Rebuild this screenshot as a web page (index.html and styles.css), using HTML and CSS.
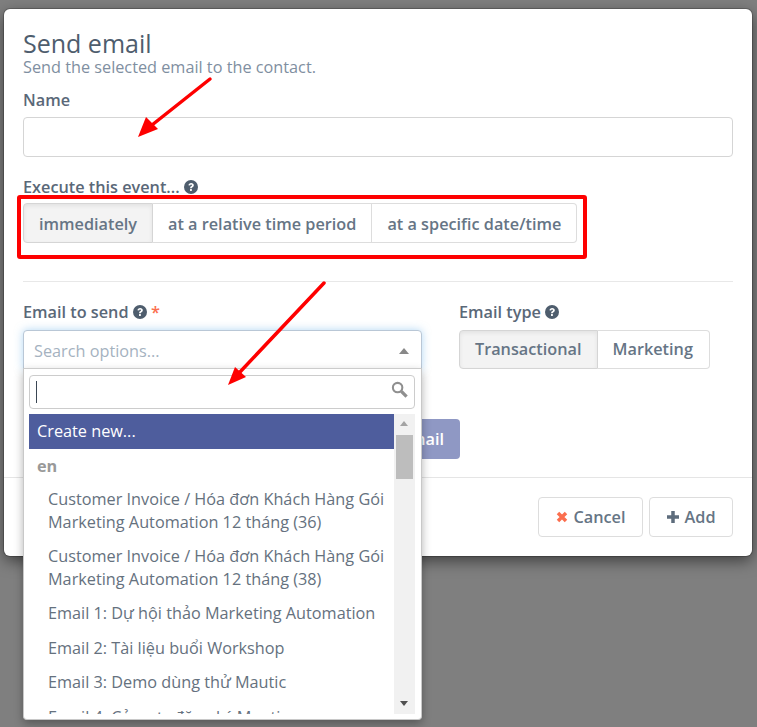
FILE: index.html
```html
<!DOCTYPE html>
<html lang="vi">
<head>
    <meta charset="UTF-8">
    <meta name="viewport" content="width=device-width, initial-scale=1.0">
    <title>Send email</title>
    <link rel="stylesheet" href="styles.css">
</head>
<body>
    <div class="modal">
        <div class="modal-body">
            <h1 class="title">Send email</h1>
            <p class="subtitle">Send the selected email to the contact.</p>

            <label class="label label-name">Name</label>
            <input class="text-input" type="text">

            <label class="label label-execute">Execute this event...
                <svg class="help" viewBox="0 0 24 24"><circle cx="12" cy="12" r="12"/><path class="help-mark" d="M7.500 9.200c.3-2.700 2.200-4.200 4.700-4.200 2.700 0 4.600 1.600 4.600 3.900 0 1.800-1 2.700-2.200 3.400-.9.600-1.200.9-1.200 1.900h-3c0-2 .7-2.900 1.900-3.700.9-.6 1.400-1 1.400-1.600 0-.8-.7-1.300-1.500-1.300-.9 0-1.500.6-1.700 1.700zM10.400 15.500h3v3.200h-3z"/></svg>
            </label>
            <div class="btn-group">
                <span class="toggle active">immediately</span>
                <span class="toggle">at a relative time period</span>
                <span class="toggle">at a specific date/time</span>
            </div>

            <hr class="divider">

            <div class="row">
                <div class="col-email">
                    <label class="label">Email to send
                        <svg class="help" viewBox="0 0 24 24"><circle cx="12" cy="12" r="12"/><path class="help-mark" d="M7.500 9.200c.3-2.700 2.200-4.200 4.700-4.200 2.700 0 4.600 1.600 4.600 3.900 0 1.800-1 2.700-2.200 3.400-.9.600-1.200.9-1.200 1.900h-3c0-2 .7-2.900 1.900-3.700.9-.6 1.400-1 1.400-1.600 0-.8-.7-1.300-1.500-1.300-.9 0-1.500.6-1.700 1.700zM10.400 15.500h3v3.200h-3z"/></svg>
                        <span class="required">*</span>
                    </label>
                    <div class="select-box">
                        <div class="select-head">
                            <span class="placeholder">Search options...</span>
                            <span class="caret-up"></span>
                        </div>
                        <div class="select-drop">
                            <div class="drop-search">
                                <span class="text-cursor"></span>
                                <svg class="search-icon" viewBox="0 0 18 18"><circle cx="7" cy="7" r="5" /><path d="M11 11l5.500 5.500"/></svg>
                            </div>
                            <div class="drop-list">
                                <div class="drop-items">
                                    <div class="option highlighted">Create new...</div>
                                    <div class="group-name">en</div>
                                    <div class="option">Customer Invoice / Hóa đơn Khách Hàng Gói Marketing Automation 12 tháng (36)</div>
                                    <div class="option">Customer Invoice / Hóa đơn Khách Hàng Gói Marketing Automation 12 tháng (38)</div>
                                    <div class="option">Email 1: Dự hội thảo Marketing Automation</div>
                                    <div class="option">Email 2: Tài liệu buổi Workshop</div>
                                    <div class="option">Email 3: Demo dùng thử Mautic</div>
                                    <div class="option">Email 4: Cảm ơn đăng ký Mautic</div>
                                </div>
                                <div class="scrollbar">
                                    <span class="scroll-up"></span>
                                    <span class="scroll-thumb"></span>
                                    <span class="scroll-down"></span>
                                </div>
                            </div>
                        </div>
                    </div>
                    <div class="new-email">New Email</div>
                </div>
                <div class="col-type">
                    <label class="label">Email type
                        <svg class="help" viewBox="0 0 24 24"><circle cx="12" cy="12" r="12"/><path class="help-mark" d="M7.500 9.200c.3-2.700 2.200-4.200 4.700-4.200 2.700 0 4.600 1.600 4.600 3.900 0 1.800-1 2.700-2.200 3.400-.9.600-1.200.9-1.200 1.900h-3c0-2 .7-2.900 1.900-3.700.9-.6 1.400-1 1.400-1.600 0-.8-.7-1.300-1.500-1.300-.9 0-1.500.6-1.700 1.700zM10.400 15.500h3v3.200h-3z"/></svg>
                    </label>
                    <div class="btn-group btn-group-small">
                        <span class="toggle active">Transactional</span>
                        <span class="toggle">Marketing</span>
                    </div>
                </div>
            </div>
        </div>

        <div class="modal-footer">
            <span class="btn">
                <svg class="btn-icon icon-cancel" viewBox="0 0 12 12"><path d="M2 2l8 8M10 2l-8 8"/></svg>Cancel
            </span>
            <span class="btn">
                <svg class="btn-icon icon-add" viewBox="0 0 12 12"><path d="M6 0v12M0 6h12"/></svg>Add
            </span>
        </div>
    </div>

    <!-- annotations drawn over the screenshot -->
    <div class="red-box"></div>
    <svg class="marks" viewBox="0 0 757 727">
        <path class="mark-line" d="M210 79L152 125"/>
        <path class="mark-head" d="M138 137L146 117 L158 129z"/>
        <path class="mark-line" d="M324 283L240 372"/>
        <path class="mark-head" d="M228 385L235 367 L246 377z"/>
    </svg>
</body>
</html>
```

FILE: styles.css
```css
* {
    box-sizing: border-box;
}
body {
    font-family: "Open Sans", sans-serif;
    background: #7f7f7f;
    color: #4e5d6d;
    margin: 0;
    height: 727px;
    overflow: hidden;
    font-size: 16.25px;
}
.modal {
    width: 748px;
    height: 547px;
    margin: 9px 0 0 4px;
    background: #fff;
    border-radius: 6px;
    box-shadow: 0 0 0 1px rgba(0,0,0,0.2), 0 5px 15px rgba(0,0,0,0.5);
}
.modal-body {
    height: 469px;
    padding: 19px 19px 0;
    border-bottom: 1px solid #e5e5e5;
}
.title {
    margin: 0 0 1px;
    font-size: 25px;
    line-height: 30px;
    font-weight: 400;
}
.subtitle {
    margin: 0 0 16px;
    font-size: 16.25px;
    line-height: 16px;
    color: #7f8fa1;
}
.label {
    display: block;
    height: 19px;
    margin-bottom: 8px;
    font-size: 16.25px;
    line-height: 19px;
    font-weight: 600;
    color: #5a6878;
}
.label-name {
    margin-bottom: 7px;
}
.label-execute {
    margin-bottom: 6px;
}
.text-input {
    display: block;
    width: 710px;
    height: 40px;
    margin-bottom: 21px;
    border: 1px solid #d5d5d5;
    border-radius: 4px;
    background: #fff;
}
.help {
    width: 14px;
    height: 14px;
    vertical-align: -1px;
    fill: #4e5d6d;
}
.help .help-mark {
    fill: #fff;
}
.required {
    color: #fb6e4e;
}
.btn-group {
    display: flex;
    width: max-content;
    height: 40px;
}
.btn-group-small {
    height: 39px;
}
.toggle {
    display: flex;
    align-items: center;
    padding: 1px 15px 0;
    border: 1px solid #ddd;
    border-left-width: 0;
    font-size: 16.25px;
    font-weight: 600;
    color: #667585;
    background: #fff;
}
.btn-group-small .toggle {
    padding-top: 0;
    padding-bottom: 1px;
}
.btn-group-small .toggle:last-child {
    padding-right: 16px;
}
.toggle:first-child {
    border-left-width: 1px;
    border-radius: 4px 0 0 4px;
}
.toggle:last-child {
    border-radius: 0 4px 4px 0;
}
.toggle.active {
    background: #f3f3f3;
    box-shadow: inset 0 2px 4px rgba(0,0,0,0.07);
    border-color: #d5d5d5;
}
.divider {
    margin: 38px 0 21px;
    border: 0;
    border-top: 1px solid #e8e8e8;
}
.row {
    display: flex;
}
.col-email {
    width: 399px;
    margin-right: 37px;
    position: relative;
}
.select-box {
    position: relative;
    z-index: 2;
}
.select-head {
    display: flex;
    align-items: center;
    justify-content: space-between;
    height: 39px;
    padding: 2px 12px 0 10px;
    background: #fff;
    border: 1px solid #b9c7d6;
    border-radius: 4px 4px 0 0;
    box-shadow: 0 0 8px rgba(102,175,233,0.5);
    font-size: 16.25px;
}
.placeholder {
    color: #a5b2bf;
}
.caret-up {
    width: 0;
    height: 0;
    border-left: 5px solid transparent;
    border-right: 5px solid transparent;
    border-bottom: 6px solid #888;
}
.select-drop {
    position: absolute;
    top: 38px;
    left: 0;
    width: 399px;
    height: 352px;
    padding: 6px 6px 5px 5px;
    background: #fff;
    border: 1px solid #c8c8c8;
    border-top-color: #ccc;
    border-radius: 0 0 4px 4px;
    box-shadow: 0 4px 10px rgba(0,0,0,0.3);
}
.drop-search {
    display: flex;
    align-items: center;
    justify-content: space-between;
    height: 34px;
    padding: 0 6px;
    border: 1px solid #ccc;
    border-radius: 4px;
    margin-bottom: 5px;
}
.text-cursor {
    width: 1px;
    height: 22px;
    background: #3a4654;
}
.search-icon {
    width: 17px;
    height: 17px;
    margin-top: -5px;
    fill: none;
    stroke: #8f8f8f;
    stroke-width: 2.200;
}
.search-icon path {
    stroke-width: 3.500;
}
.drop-list {
    display: flex;
    height: 300px;
    overflow: hidden;
}
.drop-items {
    width: 365px;
    height: 300px;
    overflow: hidden;
    flex: none;
}
.option {
    padding: 6px 8px 6px 19px;
    font-size: 16.25px;
    line-height: 22.5px;
    color: #65717e;
}
.option.highlighted {
    height: 35px;
    padding-left: 8px;
    background: #4e5d9d;
    color: #fff;
    font-weight: 500;
}
.group-name {
    height: 33px;
    padding-left: 8px;
    font-size: 16.25px;
    line-height: 35px;
    font-weight: 700;
    color: #999;
}
.scrollbar {
    position: relative;
    width: 21px;
    background: #f1f1f1;
    flex: none;
}
.scroll-up,
.scroll-down {
    position: absolute;
    left: 6px;
    width: 0;
    height: 0;
    border-left: 4.500px solid transparent;
    border-right: 4.500px solid transparent;
}
.scroll-up {
    top: 7px;
    border-bottom: 5px solid #a3a3a3;
}
.scroll-down {
    bottom: 8px;
    border-top: 5px solid #505050;
}
.scroll-thumb {
    position: absolute;
    top: 21px;
    left: 2px;
    width: 17px;
    height: 44px;
    background: #bdbdbd;
}
.new-email {
    position: absolute;
    top: 116px;
    left: 0;
    width: 437px;
    height: 40px;
    line-height: 40px;
    text-align: right;
    padding-right: 16px;
    border-radius: 4px;
    background: #8f98c4;
    color: #fff;
    font-size: 16.25px;
    font-weight: 600;
}
.modal-footer {
    display: flex;
    justify-content: flex-end;
    gap: 6px;
    padding: 19px 19px 0 0;
}
.btn {
    display: flex;
    align-items: center;
    height: 40px;
    padding: 0 16.5px;
    border: 1px solid #ddd;
    border-radius: 4px;
    background: #fff;
    font-size: 16.25px;
    font-weight: 600;
    color: #667585;
}
.btn-icon {
    width: 12px;
    height: 12px;
    margin-right: 6px;
    fill: none;
    stroke-width: 3.500;
}
.icon-cancel {
    stroke: #fb6e4e;
}
.icon-add {
    stroke: #5d6c7c;
}
.red-box {
    position: absolute;
    top: 195px;
    left: 17px;
    width: 570px;
    height: 64px;
    border: 4px solid #fe0000;
    border-radius: 3px;
    z-index: 3;
}
.marks {
    position: absolute;
    top: 0;
    left: 0;
    width: 757px;
    height: 727px;
    z-index: 4;
}
.mark-line {
    fill: none;
    stroke: #fe0000;
    stroke-width: 3.500;
    stroke-linecap: round;
}
.mark-head {
    fill: #fe0000;
}
```
